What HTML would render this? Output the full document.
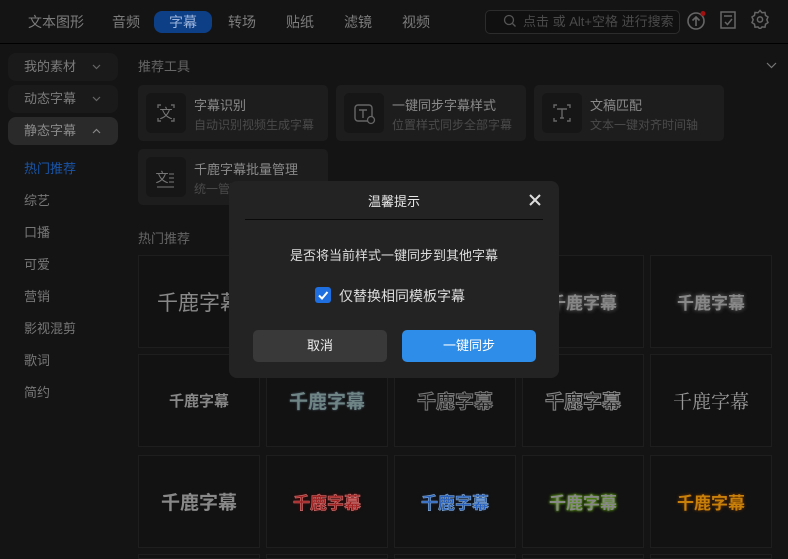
<!DOCTYPE html>
<html style="width:788px;height:559px;overflow:hidden"><head><meta charset="utf-8"><style>
*{box-sizing:border-box;margin:0;padding:0}
body{width:788px;height:559px;overflow:hidden;background:#141414;font-family:"Liberation Sans","Noto Sans CJK SC",sans-serif;color:#8a8a8a;position:relative}
.a{position:absolute}
.tab{position:absolute;top:11px;font-size:14px;color:#7c7c7c;height:22px;line-height:22px}
.side{position:absolute;left:8px;width:110px;height:28px;border-radius:8px;background:#1a1a1a;font-size:13px;color:#7c7c7c;line-height:28px;padding-left:16px}
.side svg{position:absolute;right:17px;top:11px}
.sub{position:absolute;left:24px;font-size:13px;color:#777}
.card{position:absolute;width:190px;height:56px;background:#1d1d1d;border-radius:5px}
.card .ic{position:absolute;left:8px;top:8px;width:40px;height:40px;background:#161616;border-radius:5px}
.card b{position:absolute;left:56px;top:10px;font-weight:normal;font-size:13px;color:#8a8a8a}
.card s{position:absolute;left:56px;top:31px;text-decoration:none;font-size:12px;color:#4a4a4a}
.cell{position:absolute;width:122px;height:93px;background:#121212;border:1px solid #1e1e1e;display:flex;align-items:center;justify-content:center;font-weight:bold;font-size:19px;color:#7a7a7a;white-space:nowrap}
</style></head><body>
<div class="a" style="left:0;top:0;width:788px;height:44px;border-bottom:1px solid #000;background:#141414"></div>
<div class="tab" style="left:28px">文本图形</div>
<div class="tab" style="left:112px">音频</div>
<div class="a" style="left:154px;top:11px;width:58px;height:22px;border-radius:8px;background:#0d3f87;color:#9db5dc;font-size:14px;text-align:center;line-height:22px">字幕</div>
<div class="tab" style="left:228px">转场</div>
<div class="tab" style="left:286px">贴纸</div>
<div class="tab" style="left:344px">滤镜</div>
<div class="tab" style="left:402px">视频</div>
<div class="a" style="left:485px;top:10px;width:195px;height:24px;border:1px solid #2c2c2c;border-radius:5px;background:#101010;font-size:13px;color:#4a4a4a;line-height:22px;padding-left:37px;white-space:nowrap;overflow:hidden">点击 或 Alt+空格 进行搜索</div>
<svg class="a" style="left:503px;top:14px" width="14" height="14" viewBox="0 0 14 14"><circle cx="6" cy="6" r="4.5" fill="none" stroke="#555" stroke-width="1.3"/><path d="M9.5 9.5L12.5 12.5" stroke="#555" stroke-width="1.3"/></svg>
<svg class="a" style="left:686px;top:10px" width="22" height="22" viewBox="0 0 22 22"><circle cx="10" cy="11" r="8" fill="none" stroke="#666" stroke-width="1.6"/><path d="M10 16V7M6.5 10.5L10 7l3.5 3.5" fill="none" stroke="#666" stroke-width="1.6"/><circle cx="17" cy="3.5" r="2.5" fill="#a01010"/></svg>
<svg class="a" style="left:719px;top:10px" width="18" height="20" viewBox="0 0 18 20"><rect x="2" y="2" width="14" height="16" fill="none" stroke="#666" stroke-width="1.5"/><path d="M5 6h8M6 12l2.5 2.5L13 9" fill="none" stroke="#666" stroke-width="1.5"/></svg>
<svg class="a" style="left:750px;top:9px" width="20" height="20" viewBox="0 0 20 20"><path d="M10 1.5l2 2.2 3-.3.5 3 2.5 1.6-1.2 2.8 1.2 2.8-2.5 1.6-.5 3-3-.3-2 2.2-2-2.2-3 .3-.5-3L2 13.6l1.2-2.8L2 8l2.5-1.6.5-3 3 .3z" fill="none" stroke="#666" stroke-width="1.5"/><circle cx="10" cy="10.5" r="2.6" fill="none" stroke="#666" stroke-width="1.5"/></svg>

<div class="side" style="top:53px">我的素材<svg width="9" height="6"><path d="M1 1l3.5 3.5L8 1" fill="none" stroke="#666" stroke-width="1.2"/></svg></div>
<div class="side" style="top:85px">动态字幕<svg width="9" height="6"><path d="M1 1l3.5 3.5L8 1" fill="none" stroke="#666" stroke-width="1.2"/></svg></div>
<div class="side" style="top:117px;background:#2a2a2a;color:#8a8a8a">静态字幕<svg width="9" height="6"><path d="M1 5l3.5-3.5L8 5" fill="none" stroke="#888" stroke-width="1.2"/></svg></div>
<div class="sub" style="top:158px;color:#1a55a8">热门推荐</div>
<div class="sub" style="top:190px">综艺</div>
<div class="sub" style="top:222px">口播</div>
<div class="sub" style="top:254px">可爱</div>
<div class="sub" style="top:286px">营销</div>
<div class="sub" style="top:318px">影视混剪</div>
<div class="sub" style="top:350px">歌词</div>
<div class="sub" style="top:382px">简约</div>

<div class="a" style="left:138px;top:56px;font-size:13px;color:#666">推荐工具</div>
<svg class="a" style="left:766px;top:62px" width="11" height="7"><path d="M1 1l4.5 4.5L10 1" fill="none" stroke="#777" stroke-width="1.2"/></svg>
<div class="card" style="left:138px;top:85px"><div class="ic"><svg width="40" height="40"><path d="M12 15v-3h3M25 12h3v3M28 25v3h-3M15 28h-3v-3" fill="none" stroke="#666" stroke-width="1.4"/><text x="20" y="25" font-size="13" fill="#777" text-anchor="middle" font-family="Liberation Sans,Noto Sans CJK SC">文</text></svg></div><b>字幕识别</b><s>自动识别视频生成字幕</s></div>
<div class="card" style="left:336px;top:85px"><div class="ic"><svg width="40" height="40"><rect x="11" y="12" width="17" height="16" rx="3" fill="none" stroke="#666" stroke-width="1.4"/><path d="M15 17h8M19 17v8" stroke="#666" stroke-width="1.4"/><circle cx="27" cy="27" r="3.5" fill="#161616" stroke="#666" stroke-width="1.3"/></svg></div><b>一键同步字幕样式</b><s>位置样式同步全部字幕</s></div>
<div class="card" style="left:534px;top:85px"><div class="ic"><svg width="40" height="40"><path d="M12 15v-3h3M25 12h3v3M28 25v3h-3M15 28h-3v-3M15 16h10M20 16v9M18 25h4" fill="none" stroke="#666" stroke-width="1.4"/></svg></div><b>文稿匹配</b><s>文本一键对齐时间轴</s></div>
<div class="card" style="left:138px;top:149px"><div class="ic"><svg width="40" height="40"><text x="16" y="25" font-size="13" fill="#777" text-anchor="middle" font-family="Liberation Sans,Noto Sans CJK SC">文</text><path d="M23 17h5M23 21h5M23 25h5M11 30h17" stroke="#666" stroke-width="1.3"/></svg></div><b>千鹿字幕批量管理</b><s>统一管理</s></div>

<div class="a" style="left:138px;top:228px;font-size:13px;color:#666">热门推荐</div>

<div class="cell" style="left:138px;top:255px;font-weight:normal;font-size:21px;color:#888">千鹿字幕</div>
<div class="cell" style="left:266px;top:255px">千鹿字幕</div>
<div class="cell" style="left:394px;top:255px">千鹿字幕</div>
<div class="cell" style="left:522px;top:255px;font-size:17px;color:#888;text-shadow:0 0 4px #777">千鹿字幕</div>
<div class="cell" style="left:650px;top:255px;font-size:17px;color:#888;text-shadow:0 0 4px #777">千鹿字幕</div>
<div class="cell" style="left:138px;top:354px;font-size:15px;color:#888">千鹿字幕</div>
<div class="cell" style="left:266px;top:354px;font-size:19px;color:#6f8585;text-shadow:0 0 2px #456">千鹿字幕</div>
<div class="cell" style="left:394px;top:354px;font-size:19px;color:#1a1a1a;-webkit-text-stroke:1px #777">千鹿字幕</div>
<div class="cell" style="left:522px;top:354px;font-size:19px;color:#1a1a1a;-webkit-text-stroke:1px #888">千鹿字幕</div>
<div class="cell" style="left:650px;top:354px;font-size:19px;font-weight:normal;color:#999;font-family:'Noto Serif CJK SC',serif">千鹿字幕</div>
<div class="cell" style="left:138px;top:455px;font-size:19px;color:#888">千鹿字幕</div>
<div class="cell" style="left:266px;top:455px;font-size:17px;color:#a02020;-webkit-text-stroke:0.6px #c77;text-shadow:0 0 3px #600">千鹿字幕</div>
<div class="cell" style="left:394px;top:455px;font-size:17px;color:#2560c0;-webkit-text-stroke:0.6px #8ac;text-shadow:0 0 3px #124">千鹿字幕</div>
<div class="cell" style="left:522px;top:455px;font-size:17px;color:#888;text-shadow:0 0 3px #5a9a10,0 0 2px #5a9a10">千鹿字幕</div>
<div class="cell" style="left:650px;top:455px;font-size:17px;color:#c8800a;text-shadow:0 0 3px #7a3a00">千鹿字幕</div>
<div class="cell" style="left:138px;top:554px;height:5px"></div><div class="cell" style="left:266px;top:554px;height:5px"></div><div class="cell" style="left:394px;top:554px;height:5px"></div><div class="cell" style="left:522px;top:554px;height:5px"></div><div class="cell" style="left:650px;top:554px;height:5px"></div>

<div class="a" style="left:229px;top:181px;width:330px;height:197px;background:#232323;border-radius:8px"></div>
<div class="a" style="left:229px;top:191px;width:330px;text-align:center;font-size:13px;color:#e6e6e6">温馨提示</div>
<svg class="a" style="left:528px;top:193px" width="14" height="14"><path d="M2 2l10 10M12 2L2 12" stroke="#ddd" stroke-width="2"/></svg>
<div class="a" style="left:245px;top:219px;width:298px;height:1px;background:#0a0a0a"></div>
<div class="a" style="left:229px;top:245px;width:330px;text-align:center;font-size:13px;color:#ddd">是否将当前样式一键同步到其他字幕</div>
<div class="a" style="left:315px;top:287px;width:16px;height:16px;border-radius:3px;background:#1f6fe0"></div>
<svg class="a" style="left:315px;top:287px" width="16" height="16"><path d="M4 8.5l3 3L12.5 5" fill="none" stroke="#fff" stroke-width="2"/></svg>
<div class="a" style="left:339px;top:286px;font-size:14px;color:#ddd">仅替换相同模板字幕</div>
<div class="a" style="left:253px;top:330px;width:134px;height:32px;border-radius:5px;background:#393939;color:#eee;font-size:13px;text-align:center;line-height:32px">取消</div>
<div class="a" style="left:402px;top:330px;width:134px;height:32px;border-radius:5px;background:#2e8de8;color:#fff;font-size:13px;text-align:center;line-height:32px">一键同步</div>
</body></html>
